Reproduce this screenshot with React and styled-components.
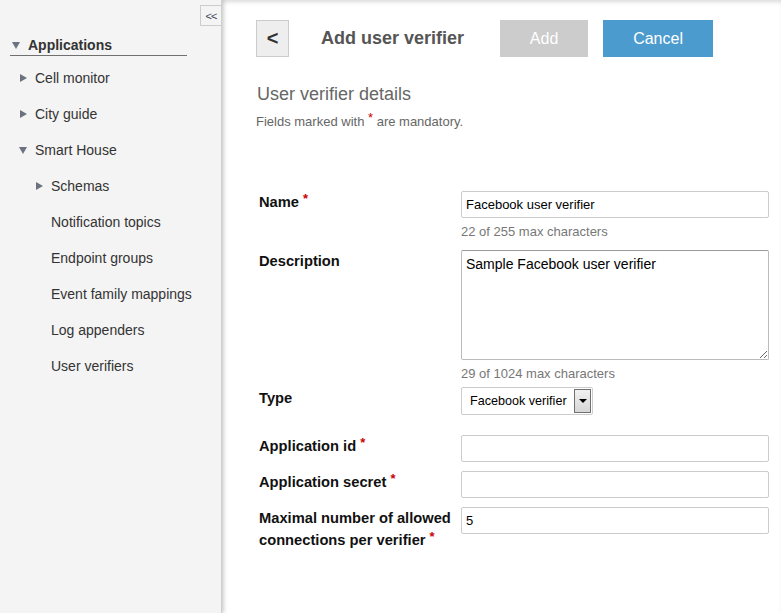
import React from "react";
import styled, { createGlobalStyle } from "styled-components";

const GlobalStyle = createGlobalStyle`
  html, body {
    margin: 0;
    padding: 0;
    background: #fff;
    font-family: "Liberation Sans", Arial, sans-serif;
  }
  * { box-sizing: border-box; }
`;

const Page = styled.div`
  display: flex;
  width: 781px;
  height: 613px;
  overflow: hidden;
`;

const Sidebar = styled.aside`
  position: relative;
  z-index: 1;
  width: 222px;
  flex-shrink: 0;
  background: #f4f4f4;
  border-right: 1px solid #cfcfcf;
  box-shadow: 2px 0 4px rgba(0, 0, 0, 0.18);
  padding-top: 5px;
`;

const ToggleRow = styled.div`
  display: flex;
  justify-content: flex-end;
`;

const ToggleButton = styled.button`
  width: 21px;
  height: 21px;
  padding: 0;
  border: 1px solid #cccccc;
  border-right: none;
  background: #f4f4f4;
  color: #445;
  font-family: "Liberation Sans", Arial, sans-serif;
  font-size: 11px;
  line-height: 18px;
  letter-spacing: -1px;
  cursor: pointer;
`;

const TreeHeading = styled.div`
  display: flex;
  align-items: center;
  margin: 10px 0 0 10px;
  width: 177px;
  height: 20px;
  border-bottom: 1px solid #707070;
  padding: 0 0 2px 2px;
  font-size: 14px;
  font-weight: bold;
  color: #333;
`;

const TreeList = styled.ul`
  list-style: none;
  margin: 4px 0 0;
  padding: 0;
`;

const TreeItem = styled.li`
  display: flex;
  align-items: center;
  height: 36px;
  padding-left: ${(p) => p.$indent}px;
  font-size: 14px;
  color: #333;
  cursor: pointer;
`;

const Arrow = styled.svg`
  width: 8px;
  height: 8px;
  margin-right: 8px;
  flex-shrink: 0;
  fill: #6c7280;
`;

const Spacer = styled.span`
  display: inline-block;
  width: 16px;
`;

function Caret({ open }) {
  return (
    <Arrow viewBox="0 0 8 8">
      {open ? <polygon points="0,1 8,1 4,8" /> : <polygon points="1,0 8,4 1,8" />}
    </Arrow>
  );
}

const Main = styled.main`
  flex: 1;
  padding: 20px 12px 0 34px;
  box-shadow: inset 0 4px 4px -2px rgba(0, 0, 0, 0.15);
`;

const Header = styled.div`
  display: flex;
  align-items: center;
  height: 37px;
`;

const BackButton = styled.button`
  width: 33px;
  height: 37px;
  padding: 0;
  background: #eeeeee;
  border: 1px solid #cccccc;
  color: #333;
  font-family: "Liberation Sans", Arial, sans-serif;
  font-size: 20px;
  font-weight: bold;
  cursor: pointer;
`;

const Title = styled.h1`
  margin: 0 36px 0 32px;
  font-size: 18px;
  font-weight: bold;
  color: #555;
`;

const ActionButton = styled.button`
  height: 37px;
  width: ${(p) => p.$width}px;
  margin-right: 15px;
  padding: 0;
  border: none;
  background: ${(p) => (p.$primary ? "#4b9bcf" : "#cccccc")};
  color: #fff;
  font-family: "Liberation Sans", Arial, sans-serif;
  font-size: 16px;
  cursor: pointer;
`;

const SectionTitle = styled.h2`
  margin: 27px 0 0 1px;
  font-size: 18px;
  font-weight: normal;
  line-height: 20px;
  color: #666;
`;

const Hint = styled.p`
  margin: 10px 0 0 0;
  font-size: 13px;
  line-height: 15px;
  color: #666;
`;

const Star = styled.span`
  position: relative;
  top: -4px;
  color: #cc0000;
  font-size: 13px;
  line-height: 0;
`;

const Form = styled.form`
  display: flex;
  flex-direction: column;
  padding-left: 3px;
`;

const Row = styled.div`
  display: grid;
  grid-template-columns: 202px 308px;
  margin-top: ${(p) => p.$top}px;
`;

const Label = styled.label`
  font-size: 14.7px;
  font-weight: bold;
  line-height: 22px;
  color: #111;
  padding-right: 4px;
`;

const Field = styled.div`
  display: flex;
  flex-direction: column;
`;

const TextInput = styled.input`
  width: 308px;
  height: 27px;
  border: 1px solid #cccccc;
  border-radius: 2px;
  padding: 0 4px;
  font-family: "Liberation Sans", Arial, sans-serif;
  font-size: 13px;
  color: #000;
  outline: none;
`;

const TextArea = styled.textarea`
  display: block;
  width: 308px;
  height: 110px;
  border: 1px solid #bbbbbb;
  border-top-color: #999;
  border-radius: 2px;
  padding: 5px 4px;
  font-family: "Liberation Sans", Arial, sans-serif;
  font-size: 14px;
  line-height: 16px;
  color: #000;
  outline: none;
`;

const Helper = styled.div`
  margin-top: 7px;
  font-size: 13px;
  line-height: 14px;
  color: #777;
`;

const SelectBox = styled.div`
  display: flex;
  align-items: stretch;
  width: 132px;
  height: 28px;
  border: 1px solid #cccccc;
  border-radius: 2px;
  background: #fff;
  cursor: pointer;
`;

const SelectValue = styled.div`
  flex: 1;
  display: flex;
  align-items: center;
  padding-left: 8px;
  font-size: 12.6px;
  color: #000;
`;

const SelectArrow = styled.div`
  width: 17px;
  display: flex;
  align-items: center;
  justify-content: center;
  border: 1px solid #707070;
  background: linear-gradient(#f2f2f2, #d6d6d6);
  margin: 1px 1px 1px 0;

  &::after {
    content: "";
    border-left: 4px solid transparent;
    border-right: 4px solid transparent;
    border-top: 4px solid #000;
  }
`;

const nav = [
  { label: "Cell monitor", indent: 19, caret: "closed" },
  { label: "City guide", indent: 19, caret: "closed" },
  { label: "Smart House", indent: 19, caret: "open" },
  { label: "Schemas", indent: 35, caret: "closed" },
  { label: "Notification topics", indent: 35 },
  { label: "Endpoint groups", indent: 35 },
  { label: "Event family mappings", indent: 35 },
  { label: "Log appenders", indent: 35 },
  { label: "User verifiers", indent: 35 },
];

export default function App() {
  return (
    <>
      <GlobalStyle />
      <Page>
        <Sidebar>
          <ToggleRow>
            <ToggleButton>&lt;&lt;</ToggleButton>
          </ToggleRow>
          <TreeHeading>
            <Caret open />
            Applications
          </TreeHeading>
          <TreeList>
            {nav.map((item) => (
              <TreeItem key={item.label} $indent={item.indent}>
                {item.caret ? <Caret open={item.caret === "open"} /> : <Spacer />}
                {item.label}
              </TreeItem>
            ))}
          </TreeList>
        </Sidebar>

        <Main>
          <Header>
            <BackButton>&lt;</BackButton>
            <Title>Add user verifier</Title>
            <ActionButton $width={88}>Add</ActionButton>
            <ActionButton $width={110} $primary>Cancel</ActionButton>
          </Header>

          <SectionTitle>User verifier details</SectionTitle>
          <Hint>
            Fields marked with <Star>*</Star> are mandatory.
          </Hint>

          <Form>
            <Row $top={62}>
              <Label>Name <Star>*</Star></Label>
              <Field>
                <TextInput defaultValue="Facebook user verifier" />
                <Helper>22 of 255 max characters</Helper>
              </Field>
            </Row>
            <Row $top={11}>
              <Label>Description</Label>
              <Field>
                <TextArea defaultValue="Sample Facebook user verifier" />
                <Helper>29 of 1024 max characters</Helper>
              </Field>
            </Row>
            <Row $top={6}>
              <Label>Type</Label>
              <Field>
                <SelectBox>
                  <SelectValue>Facebook verifier</SelectValue>
                  <SelectArrow />
                </SelectBox>
              </Field>
            </Row>
            <Row $top={20}>
              <Label>Application id <Star>*</Star></Label>
              <Field>
                <TextInput />
              </Field>
            </Row>
            <Row $top={9}>
              <Label>Application secret <Star>*</Star></Label>
              <Field>
                <TextInput />
              </Field>
            </Row>
            <Row $top={9}>
              <Label>Maximal number of allowed connections per verifier <Star>*</Star></Label>
              <Field>
                <TextInput defaultValue="5" />
              </Field>
            </Row>
          </Form>
        </Main>
      </Page>
    </>
  );
}
